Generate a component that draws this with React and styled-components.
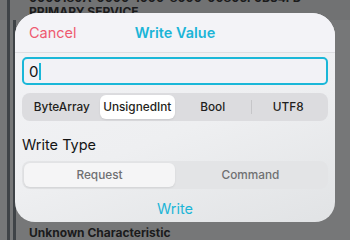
import styled, { createGlobalStyle } from "styled-components";

const GlobalStyle = createGlobalStyle`
  body {
    margin: 0;
    font-family: Inter, "Noto Sans", sans-serif;
    background: #777879;
  }
`;

const Screen = styled.div`
  position: relative;
  width: 350px;
  height: 240px;
  overflow: hidden;
  background: #767778;
`;

const List = styled.div`
  display: flex;
  flex-direction: column;
  height: 100%;
`;

const ListRow = styled.div`
  display: flex;
  align-items: ${(p) => (p.$bottom ? "flex-end" : "flex-start")};
  flex: ${(p) => (p.$grow ? 1 : "none")};
  height: ${(p) => p.$height || "auto"};
  background: ${(p) => p.$bg || "transparent"};
`;

const Bars = styled.div`
  display: flex;
  gap: 3px;
  width: 29px;
  padding-left: 7px;
  box-sizing: border-box;
  align-self: stretch;
`;

const Bar = styled.div`
  width: 3px;
  background: #3f4347;
`;

const RowText = styled.div`
  display: flex;
  flex-direction: column;
  font-size: 12px;
  font-weight: 700;
  color: #1b1b1c;
  line-height: 14px;
  margin-top: ${(p) => p.$mt || "0"};
  white-space: nowrap;
`;

const Modal = styled.div`
  position: absolute;
  left: 15px;
  top: 13px;
  width: 320px;
  height: 209px;
  border-radius: 23px 23px 20px 20px;
  overflow: hidden;
  display: flex;
  flex-direction: column;
  background: linear-gradient(160deg, #f3f3f6 0%, #eeeff1 55%, #e1e3e5 100%);
`;

const Header = styled.div`
  display: grid;
  grid-template-columns: 1fr auto 1fr;
  align-items: center;
  height: 39px;
  padding: 0 14px;
  background: #f3f3f7;
  border-bottom: 1px solid #dedee2;
  flex-shrink: 0;
`;

const HeaderButton = styled.span`
  font-size: 14.5px;
  color: #ee5a70;
`;

const Title = styled.span`
  font-size: 14.5px;
  font-weight: 600;
  color: #1bb5d7;
`;

const Body = styled.div`
  display: flex;
  flex-direction: column;
  padding: 4px 7px 0;
`;

const Input = styled.div`
  height: 28px;
  box-sizing: border-box;
  border: 2px solid #1ab7d8;
  border-radius: 5px;
  background: #f2f2f6;
  display: flex;
  align-items: center;
  padding-left: 5px;
  font-size: 15px;
  color: #111;
`;

const Caret = styled.span`
  display: inline-block;
  width: 1.5px;
  height: 17px;
  margin-left: 1px;
  background: #1ab7d8;
`;

const Segmented = styled.div`
  display: grid;
  grid-template-columns: repeat(${(p) => p.$count}, 1fr);
  height: 28px;
  margin-top: ${(p) => p.$mt};
  border-radius: 8px;
  background: ${(p) => p.$bg};
  padding: 2px;
  box-sizing: border-box;
`;

const Segment = styled.div`
  position: relative;
  display: flex;
  align-items: center;
  justify-content: center;
  border-radius: 6px;
  font-size: 11.8px;
  font-weight: 500;
  color: ${(p) => (p.$muted ? "#6f7072" : "#1f1f20")};
  background: ${(p) => (p.$active ? p.$activeBg : "transparent")};
  box-shadow: ${(p) => (p.$active ? "0 1px 2px rgba(0,0,0,0.08)" : "none")};

  &::before {
    content: "";
    display: ${(p) => (p.$divider ? "block" : "none")};
    position: absolute;
    left: 0;
    top: 5px;
    bottom: 5px;
    width: 1px;
    background: #c6c6c9;
  }
`;

const Label = styled.div`
  font-size: 14.5px;
  color: #141414;
  margin-top: 14px;
  line-height: 19px;
`;

const WriteButton = styled.div`
  text-align: center;
  font-size: 14.5px;
  color: #1bb5d7;
  margin-top: 11px;
`;

const types = ["ByteArray", "UnsignedInt", "Bool", "UTF8"];

export default function App() {
  return (
    <Screen>
      <GlobalStyle />
      <List>
        <ListRow $height="20px" $bg="#717273">
          <Bars>
            <Bar />
          </Bars>
          <RowText $mt="-9px">
            <span>0000180A-0000-1000-8000-00805F9B34FB</span>
            <span>PRIMARY SERVICE</span>
          </RowText>
        </ListRow>
        <ListRow $grow>
          <Bars>
            <Bar />
            <Bar />
          </Bars>
        </ListRow>
        <ListRow $height="18px" $bottom>
          <Bars>
            <Bar />
            <Bar />
          </Bars>
          <RowText>
            <span>Unknown Characteristic</span>
          </RowText>
        </ListRow>
      </List>

      <Modal>
        <Header>
          <HeaderButton>Cancel</HeaderButton>
          <Title>Write Value</Title>
          <span />
        </Header>
        <Body>
          <Input>
            0<Caret />
          </Input>
          <Segmented $count={4} $mt="8px" $bg="#dcdcdf">
            {types.map((t, i) => (
              <Segment
                key={t}
                $active={i === 1}
                $activeBg="#ffffff"
                $divider={i === 3}
              >
                {t}
              </Segment>
            ))}
          </Segmented>
          <Label>Write Type</Label>
          <Segmented $count={2} $mt="7px" $bg="#e3e4e6">
            <Segment $active $muted $activeBg="#f5f5f6">
              Request
            </Segment>
            <Segment $muted>Command</Segment>
          </Segmented>
          <WriteButton>Write</WriteButton>
        </Body>
      </Modal>
    </Screen>
  );
}
